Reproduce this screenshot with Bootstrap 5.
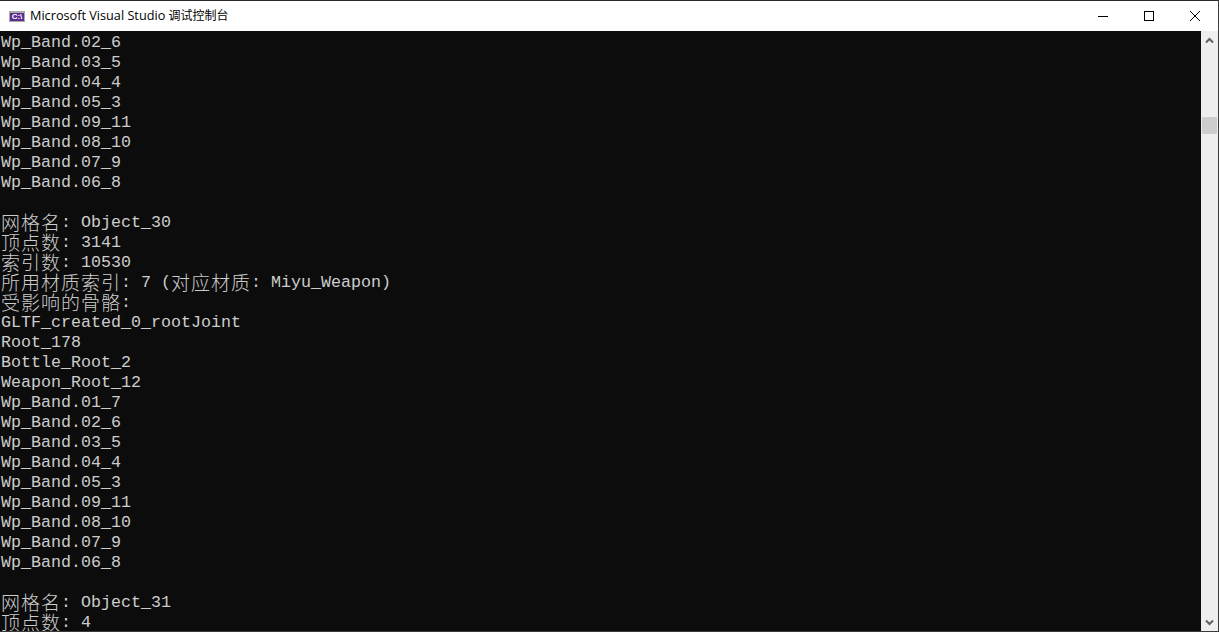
<!DOCTYPE html>
<html lang="zh-CN">
<head>
<meta charset="utf-8">
<title>Microsoft Visual Studio 调试控制台</title>
<link href="https://cdn.jsdelivr.net/npm/bootstrap@5.3.0/dist/css/bootstrap.min.css" rel="stylesheet">
<style>
html,body{height:100%;margin:0;overflow:hidden;background:#fff}
.win-frame{height:632px;border-top:1px solid #2b2b2b;border-right:1px solid #3a3a3a;border-bottom:1px solid #3a3a3a;box-sizing:border-box}
.title-strip{height:30px;background:#fff;font-family:"Open Sans","Noto Sans CJK SC",sans-serif;font-size:12.7px;color:#000;padding-left:9px}
.title-strip i{font-style:normal;font-size:12px}
.app-glyph{width:16px;height:11px;background:#5c2d91;border:1px solid #a9a9a9;border-top-width:2px;box-sizing:border-box;color:#fff;font:bold 8px/8px "Liberation Sans",sans-serif;text-align:center;margin-right:5px;overflow:hidden}
.win-btn{width:46px;height:30px}
.console-area{background:#0c0c0c;min-height:0}
.console-text{font-family:"Liberation Mono",monospace;font-size:16.67px;line-height:20px;color:#ccc;padding:2px 0 0 1px;white-space:pre;margin:0;flex:1 1 auto;overflow:hidden}
.console-text i{font-family:"Noto Sans CJK SC",sans-serif;font-style:normal;font-size:19px;letter-spacing:1px;font-weight:300;line-height:18px;display:inline-block;height:18px;vertical-align:top}
.term-line{height:20px;display:block}
.scroll-rail{width:17px;background:#eee;position:relative;flex:0 0 17px}
.scroll-thumb{position:absolute;left:1px;width:15px;top:86px;height:17px;background:#cdcdcd}
.scroll-arrow{position:absolute;left:4px;width:9px;height:7px}
</style>
</head>
<body>
<div class="win-frame d-flex flex-column">
  <div class="title-strip d-flex align-items-center flex-shrink-0">
    <span class="app-glyph">C:\</span>
    <span class="flex-grow-1">Microsoft Visual Studio <i>调试控制台</i></span>
    <div class="win-btn d-flex align-items-center justify-content-center"><svg width="10" height="10" viewBox="0 0 10 10"><path d="M0 5.5H10" stroke="#000" fill="none"/></svg></div>
    <div class="win-btn d-flex align-items-center justify-content-center"><svg width="10" height="10" viewBox="0 0 10 10"><rect x=".5" y=".5" width="9" height="9" stroke="#000" fill="none"/></svg></div>
    <div class="win-btn d-flex align-items-center justify-content-center"><svg width="10" height="10" viewBox="0 0 10 10"><path d="M0 0L10 10M10 0L0 10" stroke="#000" stroke-width="1" fill="none"/></svg></div>
  </div>
  <div class="console-area d-flex flex-grow-1 overflow-hidden">
    <div class="console-text"><span class="term-line">Wp_Band.02_6</span><span class="term-line">Wp_Band.03_5</span><span class="term-line">Wp_Band.04_4</span><span class="term-line">Wp_Band.05_3</span><span class="term-line">Wp_Band.09_11</span><span class="term-line">Wp_Band.08_10</span><span class="term-line">Wp_Band.07_9</span><span class="term-line">Wp_Band.06_8</span><span class="term-line"></span><span class="term-line"><i>网格名</i>: Object_30</span><span class="term-line"><i>顶点数</i>: 3141</span><span class="term-line"><i>索引数</i>: 10530</span><span class="term-line"><i>所用材质索引</i>: 7 (<i>对应材质</i>: Miyu_Weapon)</span><span class="term-line"><i>受影响的骨骼</i>:</span><span class="term-line">GLTF_created_0_rootJoint</span><span class="term-line">Root_178</span><span class="term-line">Bottle_Root_2</span><span class="term-line">Weapon_Root_12</span><span class="term-line">Wp_Band.01_7</span><span class="term-line">Wp_Band.02_6</span><span class="term-line">Wp_Band.03_5</span><span class="term-line">Wp_Band.04_4</span><span class="term-line">Wp_Band.05_3</span><span class="term-line">Wp_Band.09_11</span><span class="term-line">Wp_Band.08_10</span><span class="term-line">Wp_Band.07_9</span><span class="term-line">Wp_Band.06_8</span><span class="term-line"></span><span class="term-line"><i>网格名</i>: Object_31</span><span class="term-line"><i>顶点数</i>: 4</span></div>
    <div class="scroll-rail">
      <svg class="scroll-arrow" style="top:6px" viewBox="0 0 9 7"><path d="M1 5.5L4.5 2L8 5.5" stroke="#606060" stroke-width="2" fill="none"/></svg>
      <div class="scroll-thumb"></div>
      <svg class="scroll-arrow" style="bottom:5px" viewBox="0 0 9 7"><path d="M1 1.5L4.5 5L8 1.5" stroke="#606060" stroke-width="2" fill="none"/></svg>
    </div>
  </div>
</div>
</body>
</html>
